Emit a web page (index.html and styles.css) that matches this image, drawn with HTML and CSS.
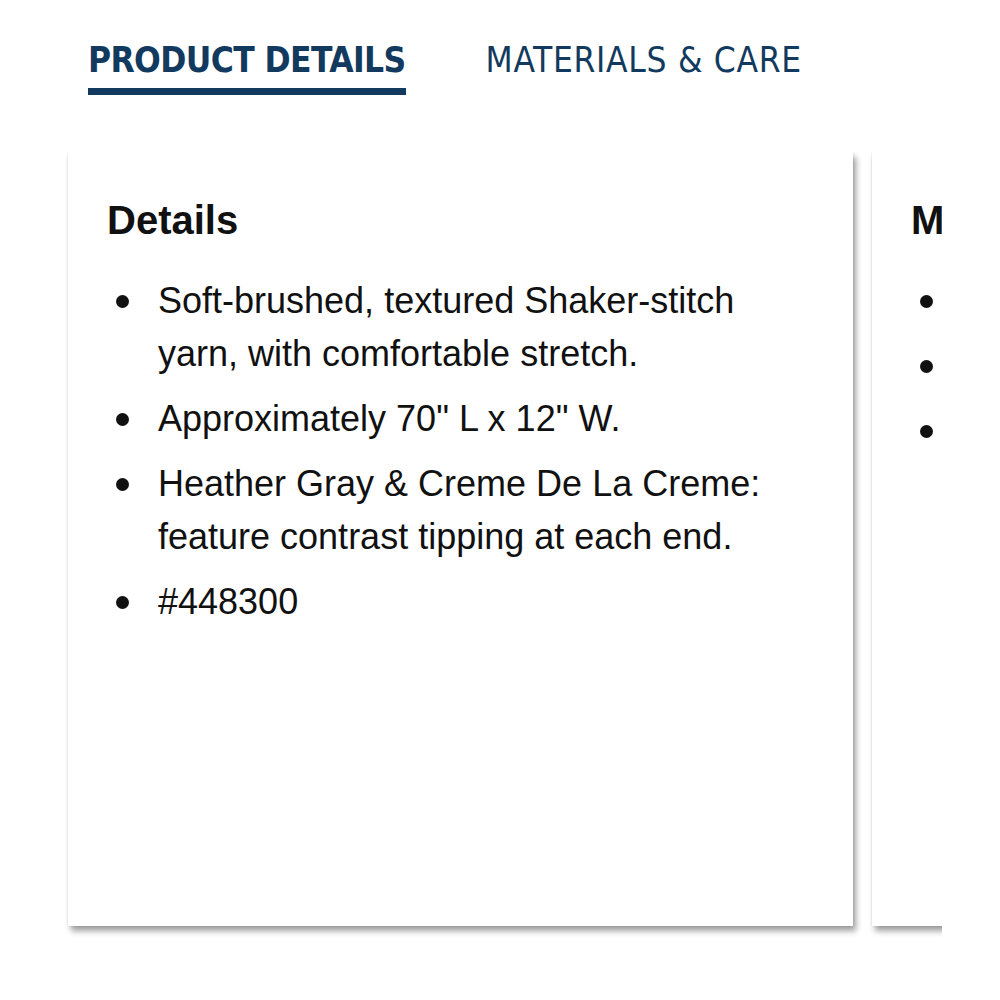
FILE: index.html
```html
<!DOCTYPE html>
<html>
<head>
<meta charset="utf-8">
<link rel="stylesheet" href="styles.css">
</head>
<body>
<nav class="tabs">
  <div class="tab active">PRODUCT DETAILS</div>
  <div class="tab">MATERIALS &amp; CARE</div>
</nav>
<div class="cards">
  <section class="card">
    <h2 class="card-title">Details</h2>
    <ul class="list">
      <li><span>Soft-brushed, textured Shaker-stitch yarn, with comfortable stretch.</span></li>
      <li><span>Approximately 70" L x 12" W.</span></li>
      <li><span>Heather Gray &amp; Creme De La Creme: feature contrast tipping at each end.</span></li>
      <li><span>#448300</span></li>
    </ul>
  </section>
  <section class="card">
    <h2 class="card-title">Materials</h2>
    <ul class="list">
      <li><span>100% acrylic.</span></li>
      <li><span>Hand wash cold.</span></li>
      <li><span>Imported.</span></li>
    </ul>
  </section>
</div>
</body>
</html>
```
FILE: styles.css
```css
html, body {
  margin: 0;
  padding: 0;
  background: #fff;
}
body {
  font-family: "Liberation Sans", Arial, sans-serif;
  color: #111;
}
.tabs {
  display: flex;
  gap: 80px;
  padding: 38px 0 0 88px;
  height: 57px;
}
.tab {
  font-family: "DejaVu Sans Condensed", "Liberation Sans", sans-serif;
  font-size: 35px;
  color: #123a5e;
  line-height: 44px;
  height: 44px;
  letter-spacing: 0.7px;
}
.tab.active {
  font-weight: bold;
  letter-spacing: -0.6px;
  border-bottom: 7px solid #123a5e;
  padding-bottom: 6px;
  height: 44px;
}
.cards {
  display: flex;
  gap: 19px;
  width: 874px;
  margin: 57px 0 0 60px;
  padding: 0 0 14px 8px;
  overflow: hidden;
}
.card {
  flex: 0 0 785px;
  height: 774px;
  box-sizing: border-box;
  background: #fff;
  padding: 44px 60px 0 39px;
  box-shadow: 3px 5px 6px rgba(0,0,0,0.38), 0 0 2px rgba(0,0,0,0.12);
}
.card-title {
  margin: 0 0 30px 0;
  font-size: 40px;
  line-height: 48px;
  font-weight: bold;
  color: #111;
}
.list {
  list-style: none;
  margin: 0;
  padding: 0;
  font-size: 36px;
  line-height: 53px;
}
.list li {
  display: flex;
  align-items: flex-start;
  margin-bottom: 12px;
}
.list li::before {
  content: "";
  flex: 0 0 13px;
  height: 13px;
  border-radius: 50%;
  background: #111;
  margin: 21px 29px 0 9px;
}
```
